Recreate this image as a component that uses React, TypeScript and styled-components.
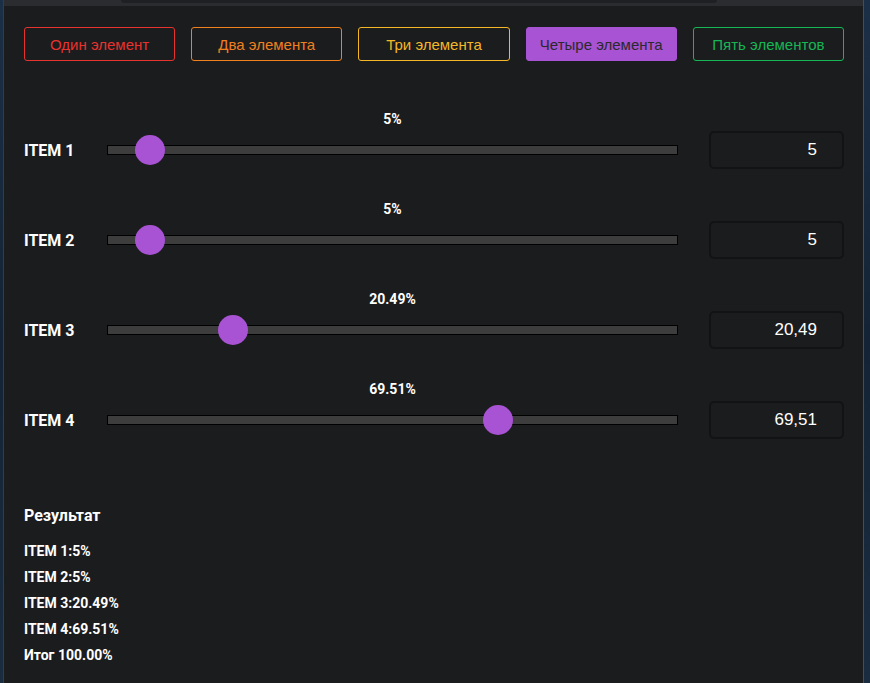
import React, { useState } from 'react'
import styled, { createGlobalStyle } from 'styled-components'

type Item = {
  name: string;
  value: number;
}

const buttons = [
  { title: 'Один элемент', color: '#e8322d', filled: false },
  { title: 'Два элемента', color: '#f0801f', filled: false },
  { title: 'Три элемента', color: '#f3b727', filled: false },
  { title: 'Четыре элемента', color: '#a852d4', filled: true },
  { title: 'Пять элементов', color: '#17b655', filled: false },
]

const formatInput = (v: number) => String(v).replace('.', ',')

const App = () => {
  const [items, setItems] = useState<Item[]>([
    { name: 'ITEM 1', value: 5 },
    { name: 'ITEM 2', value: 5 },
    { name: 'ITEM 3', value: 20.49 },
    { name: 'ITEM 4', value: 69.51 },
  ])

  const setValue = (index: number, value: number) => {
    setItems(items.map((it, i) => (i === index ? { ...it, value } : it)))
  }

  const total = items.reduce((sum, it) => sum + it.value, 0)

  return (
    <Page>
      <GlobalStyle />
      <Panel>
        <TopStrip>
          <Notch />
        </TopStrip>
        <Content>
          <ButtonRow>
            {buttons.map((b) => (
              <ModeButton key={b.title} color={b.color} filled={b.filled}>
                {b.title}
              </ModeButton>
            ))}
          </ButtonRow>

          <SliderList>
            {items.map((it, i) => (
              <SliderRow key={it.name}>
                <Percent>{it.value}%</Percent>
                <ItemLabel>{it.name}</ItemLabel>
                <Range
                  type="range"
                  min={0}
                  max={100}
                  step={0.01}
                  value={it.value}
                  onChange={(e) => setValue(i, Number(e.target.value))}
                />
                <NumberBox
                  type="text"
                  value={formatInput(it.value)}
                  onChange={(e) => {
                    const n = Number(e.target.value.replace(',', '.'))
                    if (!isNaN(n)) setValue(i, n)
                  }}
                />
              </SliderRow>
            ))}
          </SliderList>

          <Result>
            <ResultTitle>Результат</ResultTitle>
            {items.map((it) => (
              <ResultLine key={it.name}>
                {it.name}:{it.value}%
              </ResultLine>
            ))}
            <ResultLine>Итог {total.toFixed(2)}%</ResultLine>
          </Result>
        </Content>
      </Panel>
    </Page>
  )
}

export default App

//Styled Components
const GlobalStyle = createGlobalStyle`
  html, body {
    margin: 0;
    padding: 0;
    background: #15263a;
  }
  * {
    box-sizing: border-box;
  }
`
const Page = styled.div`
  display: flex;
  height: 683px;
  padding: 0 6px 0 3px;
  background: linear-gradient(180deg, #1b2f46 0%, #142436 50%, #1a2c40 100%);
  overflow: hidden;
`
const Panel = styled.div`
  flex: 1;
  display: flex;
  flex-direction: column;
  background: #1b1c1e;
  border-left: 1px solid #3a3b3f;
  border-right: 1px solid #4b4c51;
`
const TopStrip = styled.div`
  height: 6px;
  background: #2b2c30;
  padding-left: 117px;
`
const Notch = styled.div`
  width: 596px;
  height: 3px;
  background: #1f2023;
  border-radius: 0 0 6px 6px;
`
const Content = styled.div`
  padding: 21px 19px 0 20px;
`
const ButtonRow = styled.div`
  display: grid;
  grid-template-columns: repeat(5, 1fr);
  column-gap: 16px;
`
const ModeButton = styled.button<{ color: string; filled: boolean }>`
  height: 34px;
  border: 1px solid ${(p) => p.color};
  border-radius: 3px;
  background: ${(p) => (p.filled ? p.color : 'transparent')};
  color: ${(p) => (p.filled ? '#2a2a2c' : p.color)};
  font-family: 'Liberation Sans', Arial, sans-serif;
  font-size: 15px;
  cursor: pointer;
  padding: 0;
`
const SliderList = styled.div`
  display: flex;
  flex-direction: column;
  gap: 33px;
  margin-top: 51px;
`
const SliderRow = styled.div`
  display: grid;
  grid-template-columns: 83px 1fr 31px 135px;
  grid-template-rows: 14px 38px;
  row-gap: 5px;
  align-items: center;
`
const Percent = styled.div`
  grid-column: 2;
  grid-row: 1;
  text-align: center;
  font-family: Roboto, sans-serif;
  font-weight: 700;
  font-size: 14px;
  line-height: 14px;
  color: #ffffff;
`
const ItemLabel = styled.div`
  grid-column: 1;
  grid-row: 2;
  font-family: Roboto, sans-serif;
  font-weight: 700;
  font-size: 16px;
  color: #ffffff;
`
const Range = styled.input`
  grid-column: 2;
  grid-row: 2;
  -webkit-appearance: none;
  appearance: none;
  width: 100%;
  height: 10px;
  margin: 0;
  background: #3d3d3e;
  border: 1px solid #000000;
  outline: none;

  &::-webkit-slider-thumb {
    -webkit-appearance: none;
    appearance: none;
    width: 30px;
    height: 30px;
    border-radius: 50%;
    background: #a852d4;
    border: none;
    cursor: pointer;
  }
`
const NumberBox = styled.input`
  grid-column: 4;
  grid-row: 2;
  height: 38px;
  width: 100%;
  background: #1b1c1e;
  border: 2px solid #121315;
  border-radius: 5px;
  padding: 0 25px 0 10px;
  text-align: right;
  color: #ffffff;
  font-family: 'Liberation Sans', Arial, sans-serif;
  font-size: 17px;
  outline: none;
`
const Result = styled.div`
  display: flex;
  flex-direction: column;
  gap: 8px;
  margin-top: 67px;
  color: #ffffff;
  font-family: Roboto, sans-serif;
  font-weight: 700;
`
const ResultTitle = styled.h3`
  margin: 0 0 8px 0;
  font-size: 16px;
  line-height: 20px;
`
const ResultLine = styled.div`
  font-size: 14px;
  line-height: 18px;
`
